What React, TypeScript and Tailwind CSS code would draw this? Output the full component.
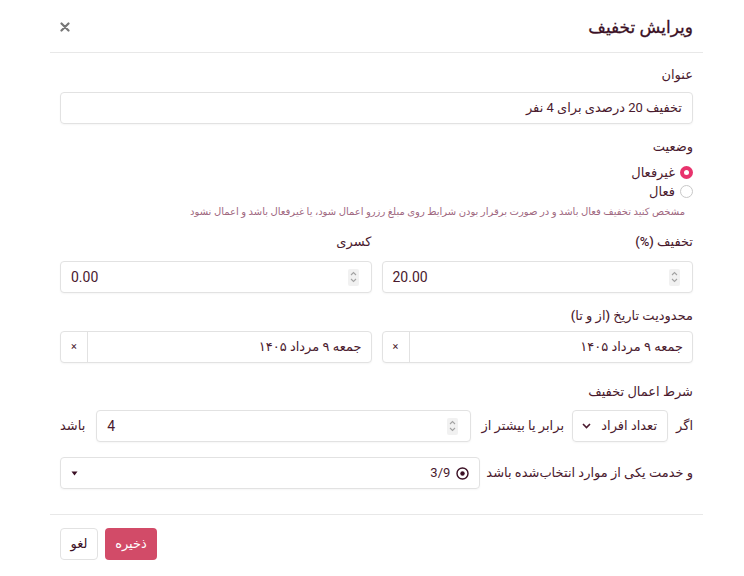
import React, { useState } from "react";

const Spinner = () => (
  <span className="flex h-[17px] w-[11px] flex-col items-center justify-center rounded-[2px] bg-[#f1f1f1]">
    <svg width="7" height="14" viewBox="0 0 7 14" fill="none" stroke="#a3a3a3" strokeWidth="1.1">
      <path d="M1 5 L3.5 2.5 L6 5" />
      <path d="M1 9 L3.5 11.5 L6 9" />
    </svg>
  </span>
);

const NumberBox = ({ value, className = "" }: { value: string; className?: string }) => (
  <div
    dir="ltr"
    className={`flex h-[32px] items-center justify-between rounded-[4px] border border-[#e2e2e2] bg-white pl-[10px] pr-[12px] shadow-[0_1px_2px_rgba(0,0,0,0.04)] ${className}`}
  >
    <span className="text-[14px] text-[#4a1a2e]">{value}</span>
    <Spinner />
  </div>
);

const DateBox = ({ value }: { value: string }) => (
  <div className="flex h-[32px] flex-1 items-stretch rounded-[4px] border border-[#e2e2e2] bg-white shadow-[0_1px_2px_rgba(0,0,0,0.04)]">
    <div className="flex flex-1 items-center pr-[9px] text-[13px] text-[#4a1a2e]">{value}</div>
    <div className="flex w-[27px] items-center justify-center border-r border-[#e2e2e2] text-[11px] text-[#4a1a2e]">
      ×
    </div>
  </div>
);

export default function App() {
  const [active, setActive] = useState(false);

  return (
    <div
      dir="rtl"
      className="min-h-screen bg-white pl-[60px] pr-[51px] text-[#4a1a2e]"
      style={{ fontFamily: 'Roboto, "DejaVu Sans", sans-serif' }}
    >
      {/* Header */}
      <div className="-ml-[10px] -mr-[10px] flex items-center justify-between border-b border-[#e8e8e8] pb-[12px] pl-[8px] pr-[10px] pt-[14px]">
        <h1 className="text-[17px] font-normal leading-[26px] text-[#3b1025] [-webkit-text-stroke:0.3px_#3b1025]">
          ویرایش تخفیف
        </h1>
        <button className="flex h-[14px] w-[14px] items-center justify-center text-[#777]">
          <svg width="10" height="10" viewBox="0 0 10 10" stroke="currentColor" strokeWidth="2.2" strokeLinecap="round">
            <path d="M1.5 1.5 L8.5 8.5 M8.5 1.5 L1.5 8.5" />
          </svg>
        </button>
      </div>

      {/* Body */}
      <div className="pt-[12px]">
        <label className="block text-[13px] font-medium leading-[20px]">عنوان</label>
        <div className="mt-[7px] flex h-[32px] items-center rounded-[4px] border border-[#e2e2e2] px-[10px] text-[13px] shadow-[0_1px_2px_rgba(0,0,0,0.04)]">
          تخفیف 20 درصدی برای 4 نفر
        </div>

        <label className="mt-[13px] block text-[13px] font-medium leading-[20px]">وضعیت</label>
        <div className="mt-[6px] flex flex-col">
          <button onClick={() => setActive(false)} className="flex h-[19px] items-center gap-[5px] text-[13px]">
            <span
              className={`flex h-[13px] w-[13px] items-center justify-center rounded-full ${
                !active ? "bg-[#e8336d]" : "border border-[#c8c8c8] bg-white"
              }`}
            >
              {!active && <span className="h-[5px] w-[5px] rounded-full bg-white" />}
            </span>
            غیرفعال
          </button>
          <button onClick={() => setActive(true)} className="flex h-[19px] items-center gap-[5px] text-[13px]">
            <span
              className={`flex h-[13px] w-[13px] items-center justify-center rounded-full ${
                active ? "bg-[#e8336d]" : "border border-[#c8c8c8] bg-white"
              }`}
            >
              {active && <span className="h-[5px] w-[5px] rounded-full bg-white" />}
            </span>
            فعال
          </button>
        </div>
        <p className="mt-[3px] pr-[8px] text-[10px] leading-[16px] text-[#a0687f]">
          مشخص کنید تخفیف فعال باشد و در صورت برقرار بودن شرایط روی مبلغ رزرو اعمال شود، یا غیرفعال باشد و اعمال نشود
        </p>

        <div className="mt-[12px] grid grid-cols-2 gap-x-[10px]">
          <div>
            <label className="block text-[13px] font-medium leading-[20px]">تخفیف (%)</label>
            <NumberBox value="20.00" className="mt-[9px]" />
          </div>
          <div>
            <label className="block text-[13px] font-medium leading-[20px]">کسری</label>
            <NumberBox value="0.00" className="mt-[9px]" />
          </div>
        </div>

        <label className="mt-[13px] block text-[13px] font-medium leading-[20px]">محدودیت تاریخ (از و تا)</label>
        <div className="mt-[5px] flex gap-[10px]">
          <DateBox value="جمعه ۹ مرداد ۱۴۰۵" />
          <DateBox value="جمعه ۹ مرداد ۱۴۰۵" />
        </div>

        <label className="mt-[19px] block text-[13px] font-medium leading-[20px]">شرط اعمال تخفیف</label>
        <div className="mt-[8px] flex items-center">
          <span className="ml-[8px] text-[13px]">اگر</span>
          <div className="flex h-[32px] w-[96px] items-center justify-between rounded-[4px] border border-[#e2e2e2] pl-[9px] pr-[10px] text-[13px] shadow-[0_1px_2px_rgba(0,0,0,0.04)]">
            <span>تعداد افراد</span>
            <svg width="9" height="6" viewBox="0 0 9 6" fill="none" stroke="#4a1a2e" strokeWidth="1.6">
              <path d="M1 1 L4.5 4.5 L8 1" />
            </svg>
          </div>
          <span className="mr-[8px] ml-[10px] whitespace-nowrap text-[13px]">برابر یا بیشتر از</span>
          <NumberBox value="4" className="flex-1" />
          <span className="mr-[11px] text-[13px]">باشد</span>
        </div>

        <div className="mt-[15px] flex items-center">
          <span className="ml-[6px] whitespace-nowrap text-[13px]">و خدمت یکی از موارد انتخاب‌شده باشد</span>
          <div className="flex h-[32px] flex-1 items-center justify-between rounded-[4px] border border-[#e2e2e2] pl-[10px] pr-[10px] text-[13px] shadow-[0_1px_2px_rgba(0,0,0,0.04)]">
            <span className="flex items-center gap-[6px]">
              <svg width="13" height="13" viewBox="0 0 13 13" fill="none">
                <circle cx="6.5" cy="6.5" r="5.5" stroke="#3b1025" strokeWidth="1.4" />
                <circle cx="6.5" cy="6.5" r="2.2" fill="#3b1025" />
              </svg>
              <span dir="ltr">3/9</span>
            </span>
            <svg width="7" height="5" viewBox="0 0 7 5">
              <path d="M0.5 0.5 L6.5 0.5 L3.5 4.5 Z" fill="#3b1025" />
            </svg>
          </div>
        </div>
      </div>

      {/* Footer */}
      <div className="-ml-[10px] -mr-[10px] mt-[25px] border-t border-[#e8e8e8] pl-[10px] pt-[13px]">
        <div className="flex justify-end gap-[7px]">
          <button className="h-[32px] w-[52px] rounded-[4px] bg-[#d24b68] text-[13px] text-white">ذخیره</button>
          <button className="h-[32px] w-[38px] rounded-[4px] border border-[#e2e2e2] bg-white text-[13px] text-[#3b1025]">
            لغو
          </button>
        </div>
      </div>
    </div>
  );
}
